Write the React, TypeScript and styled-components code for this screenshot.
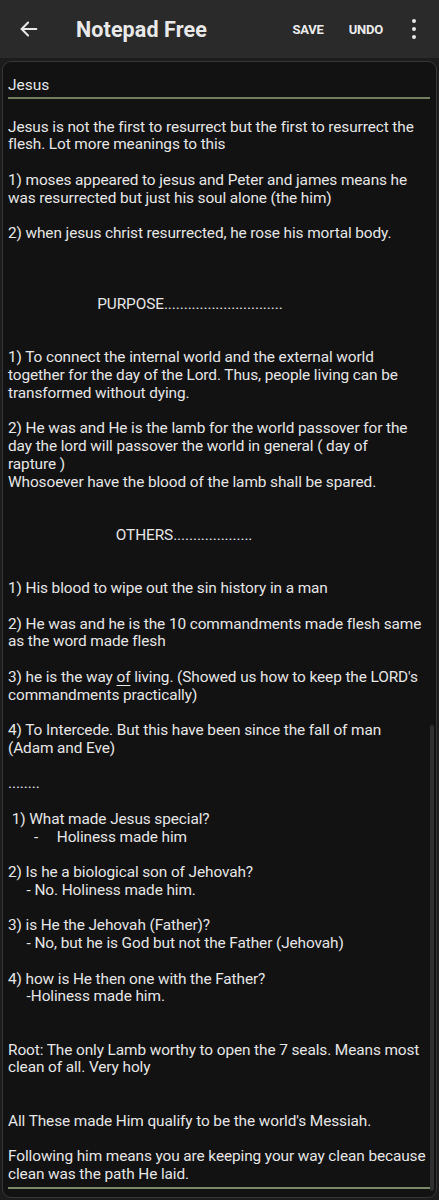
import React from "react";
import styled, { createGlobalStyle } from "styled-components";

const Global = createGlobalStyle`
  html, body { margin: 0; padding: 0; background: #1c1c1c; }
  body { font-family: Roboto, "Noto Sans", "Liberation Sans", sans-serif; -webkit-font-smoothing: antialiased; }
`;

const Page = styled.div`
  width: 439px;
  min-height: 1200px;
  background: #1c1c1c;
  display: flex;
  flex-direction: column;
`;

const AppBar = styled.header`
  height: 58px;
  background: #2a2a2a;
  display: flex;
  align-items: center;
  padding: 0 0 0 16px;
  box-sizing: border-box;
`;

const IconButton = styled.div`
  width: 26px;
  height: 26px;
  display: flex;
  align-items: center;
  justify-content: center;
  color: #e8e8e8;
`;

const Title = styled.h1`
  margin: 0 0 0 34px;
  font-size: 21.5px;
  font-weight: 700;
  color: #e9e9e9;
  letter-spacing: 0.1px;
  flex: 1;
`;

const Action = styled.span<{ $gap: number }>`
  font-size: 13px;
  font-weight: 700;
  color: #ececec;
  letter-spacing: -0.2px;
  margin-right: ${(p) => p.$gap}px;
`;

const Kebab = styled.div`
  width: 22px;
  height: 26px;
  display: flex;
  flex-direction: column;
  align-items: center;
  justify-content: center;
  gap: 3.5px;
  margin-right: 14px;
`;

const Dot = styled.span`
  width: 4.5px;
  height: 4.5px;
  border-radius: 50%;
  background: #e8e8e8;
`;

const Card = styled.main`
  position: relative;
  margin: 3px 2px 4px 2px;
  background: #121212;
  border: 1px solid #363636;
  border-radius: 9px;
  padding: 13px 3px 8px 5px;
  display: flex;
  flex-direction: column;
`;

const TitleField = styled.div`
  font-size: 15.5px;
  line-height: 20px;
  color: #e6e6e6;
  padding-bottom: 2px;
  margin-right: 3px;
  border-bottom: 2px solid #717f60;
`;

const NoteBody = styled.div`
  margin-top: 19.5px;
  font-size: 15.4px;
  letter-spacing: -0.1px;
  line-height: 17.75px;
  color: #e6e6e6;
  white-space: pre-wrap;
  padding-bottom: 3px;
  margin-right: 3px;
  border-bottom: 2px solid #7a8a68;
`;

const Under = styled.span`
  text-decoration: underline;
  text-underline-offset: 3px;
`;

const Scrollbar = styled.div`
  position: absolute;
  right: 2px;
  top: 663px;
  bottom: 6px;
  width: 4px;
  background: #303030;
  border-radius: 2px;
`;

const before = `Jesus is not the first to resurrect but the first to resurrect the flesh. Lot more meanings to this

1) moses appeared to jesus and Peter and james means he was resurrected but just his soul alone (the him)

2) when jesus christ resurrected, he rose his mortal body.



                        PURPOSE..............................


1) To connect the internal world and the external world together for the day of the Lord. Thus, people living can be transformed without dying.

2) He was and He is the lamb for the world passover for the day the lord will passover the world in general ( day of
rapture )
Whosoever have the blood of the lamb shall be spared.


                             OTHERS....................


1) His blood to wipe out the sin history in a man

2) He was and he is the 10 commandments made flesh same as the word made flesh

3) he is the way `;

const after = ` living. (Showed us how to keep the LORD's commandments practically)

4) To Intercede. But this have been since the fall of man
(Adam and Eve)

........

 1) What made Jesus special?
       -     Holiness made him

2) Is he a biological son of Jehovah?
     - No. Holiness made him.

3) is He the Jehovah (Father)?
     - No, but he is God but not the Father (Jehovah)

4) how is He then one with the Father?
     -Holiness made him.


Root: The only Lamb worthy to open the 7 seals. Means most clean of all. Very holy


All These made Him qualify to be the world's Messiah.

Following him means you are keeping your way clean because clean was the path He laid.`;

export default function App() {
  return (
    <Page>
      <Global />
      <AppBar>
        <IconButton>
          <svg width="22" height="22" viewBox="0 0 24 24" fill="none" stroke="currentColor" strokeWidth="2.2" strokeLinecap="round" strokeLinejoin="round">
            <path d="M20 12H4" />
            <path d="M11 5l-7 7 7 7" />
          </svg>
        </IconButton>
        <Title>Notepad Free</Title>
        <Action $gap={25}>SAVE</Action>
        <Action $gap={20}>UNDO</Action>
        <Kebab>
          <Dot />
          <Dot />
          <Dot />
        </Kebab>
      </AppBar>
      <Card>
        <TitleField>Jesus</TitleField>
        <NoteBody>
          {before}
          <Under>of</Under>
          {after}
        </NoteBody>
        <Scrollbar />
      </Card>
    </Page>
  );
}
